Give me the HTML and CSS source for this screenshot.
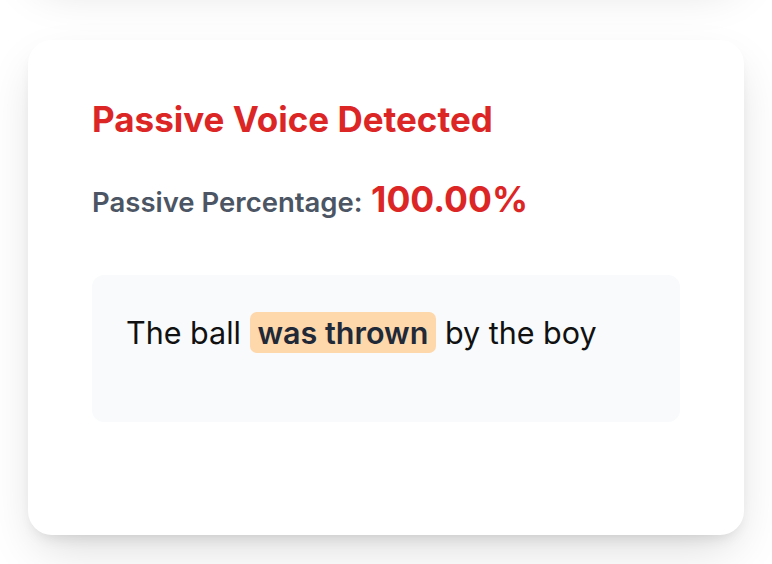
FILE: index.html
```html
<!DOCTYPE html>
<html lang="en">
<head>
    <meta charset="UTF-8">
    <meta name="viewport" content="width=device-width, initial-scale=1.0">
    <title>Passive Voice Checker</title>
    <link rel="stylesheet" href="styles.css">
</head>
<body>
    <div class="page">
        <!-- 위쪽 카드 (스크롤로 가려진 부분) -->
        <div class="card card-prev"></div>

        <!-- 결과 카드 -->
        <div class="card result">
            <h2 class="title">Passive Voice Detected</h2>
            <p class="stat">
                <span class="stat-label">Passive Percentage:</span>
                <span class="stat-value">100.00%</span>
            </p>
            <div class="sentence">
                The ball <mark class="hl">was thrown</mark> by the boy
            </div>
        </div>
    </div>
</body>
</html>
```

FILE: styles.css
```css
/* 초기화 */
html, body{
    margin: 0;
    padding: 0;
}
body{
    background: #fff;
    font-family: Inter, "Noto Sans", sans-serif;
    color: #111827;
}

/* 아래 그림자가 잘리지 않도록 하단 여백 */
.page{
    padding: 0 28px 29px;
}

/* 카드 공통 */
.card{
    background: #fff;
    border-radius: 24px;
    box-shadow: 0 20px 50px -10px rgba(0,0,0,.16), 0 8px 16px -8px rgba(0,0,0,.14);
}

/* 위에 있는 카드 - 아랫부분 그림자만 보임 */
.card-prev{
    height: 100px;
    margin-top: -125px;
}

.result{
    margin-top: 65px;
    padding: 55px 64px 113px;
}

.title{
    margin: 0;
    color: #dc2626;
    font-size: 35px;
    font-weight: 700;
    line-height: 48px;
}

.stat{
    margin: 33px 0 0;
    line-height: 48px;
}
.stat-label{
    color: #4b5563;
    font-size: 27.5px;
    font-weight: 600;
}
.stat-value{
    margin-left: 4px;
    color: #dc2626;
    font-size: 35.5px;
    font-weight: 700;
}

/* 문장 박스 */
.sentence{
    margin-top: 45px;
    min-height: 83px;
    padding: 32px 34px;
    border-radius: 12px;
    background: #f8fafc;
    font-size: 30.5px;
    line-height: 52px;
    color: #111;
}
.hl{
    padding: 2px 8px;
    border-radius: 7px;
    background: #fed7aa;
    color: #1f2937;
    font-weight: 600;
}
```
